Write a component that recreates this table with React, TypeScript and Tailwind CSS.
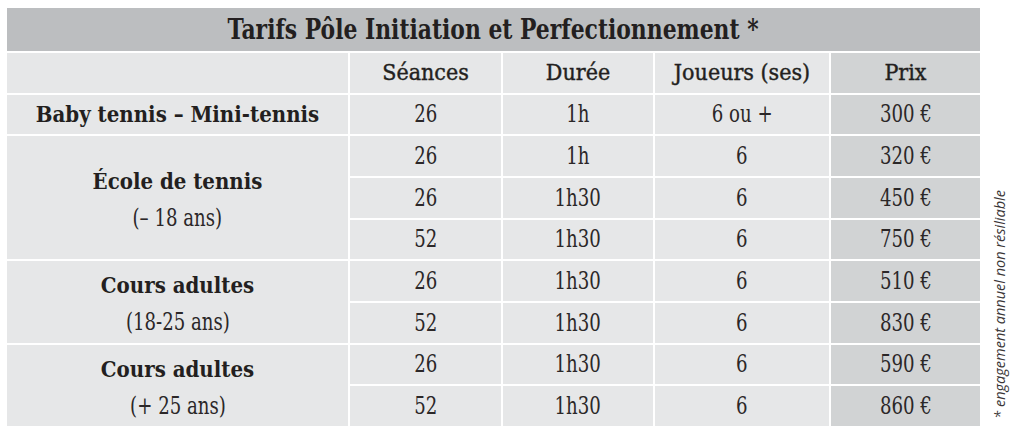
import React from 'react';

const slab = "font-['DejaVu_Serif',serif] font-stretch-condensed";

type Line = { seances: string; duree: string; joueurs: string; prix: string };
type Group = { title: string; sub?: string; lines: Line[] };

const groups: Group[] = [
  { title: 'Baby tennis – Mini-tennis', lines: [{ seances: '26', duree: '1h', joueurs: '6 ou +', prix: '300 €' }] },
  {
    title: 'École de tennis',
    sub: '(– 18 ans)',
    lines: [
      { seances: '26', duree: '1h', joueurs: '6', prix: '320 €' },
      { seances: '26', duree: '1h30', joueurs: '6', prix: '450 €' },
      { seances: '52', duree: '1h30', joueurs: '6', prix: '750 €' },
    ],
  },
  {
    title: 'Cours adultes',
    sub: '(18-25 ans)',
    lines: [
      { seances: '26', duree: '1h30', joueurs: '6', prix: '510 €' },
      { seances: '52', duree: '1h30', joueurs: '6', prix: '830 €' },
    ],
  },
  {
    title: 'Cours adultes',
    sub: '(+ 25 ans)',
    lines: [
      { seances: '26', duree: '1h30', joueurs: '6', prix: '590 €' },
      { seances: '52', duree: '1h30', joueurs: '6', prix: '860 €' },
    ],
  },
];

const spans: Record<number, string> = { 1: 'row-span-1', 2: 'row-span-2', 3: 'row-span-3' };

const cell = 'flex items-center justify-center bg-[#e6e7e8]';
const prixCell = 'flex items-center justify-center bg-[#d1d3d4]';

// the print face is narrower than anything installed, so squeeze a little
const Num = ({ children }: { children: React.ReactNode }) => (
  <span className={`inline-block scale-x-[0.84] text-[24px] leading-none whitespace-pre text-[#2b2728] ${slab}`}>
    {children}
  </span>
);

const Head = ({ children }: { children: React.ReactNode }) => (
  <span className={`inline-block text-[23px] leading-none whitespace-nowrap [-webkit-text-stroke:0.4px_#231f20] ${slab}`}>
    {children}
  </span>
);

export default function App() {
  return (
    <div className="w-[1024px] h-[439px] bg-white flex items-start pl-[7px] pt-[8px] text-[#231f20]">
      <div className="w-[973px] flex flex-col gap-[2px]">
        <div className="h-[43px] bg-[#bcbec0] flex items-center justify-center">
          <span className={`inline-block scale-x-[0.9] text-[27px] font-bold leading-none whitespace-nowrap ${slab}`}>
            Tarifs Pôle Initiation et Perfectionnement *
          </span>
        </div>
        <div className="grid grid-cols-[341px_151px_150px_174px_149px] grid-rows-[repeat(9,39.67px)] gap-[2px]">
          <div className={cell} />
          <div className={cell}><Head>Séances</Head></div>
          <div className={cell}><Head>Durée</Head></div>
          <div className={cell}><Head>Joueurs (ses)</Head></div>
          <div className={prixCell}><Head>Prix</Head></div>
          {groups.map((g, gi) => (
            <React.Fragment key={gi}>
              <div className={`${spans[g.lines.length]} ${cell} flex-col gap-[14px] ${g.sub ? 'pt-[5px]' : ''}`}>
                <span className={`inline-block text-[22px] font-bold leading-none whitespace-nowrap ${slab}`}>{g.title}</span>
                {g.sub && <Num>{g.sub}</Num>}
              </div>
              {g.lines.map((l, li) => (
                <React.Fragment key={li}>
                  <div className={cell}><Num>{l.seances}</Num></div>
                  <div className={cell}><Num>{l.duree}</Num></div>
                  <div className={cell}><Num>{l.joueurs}</Num></div>
                  <div className={prixCell}><Num>{l.prix}</Num></div>
                </React.Fragment>
              ))}
            </React.Fragment>
          ))}
        </div>
      </div>
      <div className="self-end mb-[20px] ml-[13px] [writing-mode:vertical-rl] rotate-180 text-[14.5px] italic font-['Open_Sans',sans-serif] leading-none text-[#3a3637]">
        * engagement annuel non résiliable
      </div>
    </div>
  );
}
